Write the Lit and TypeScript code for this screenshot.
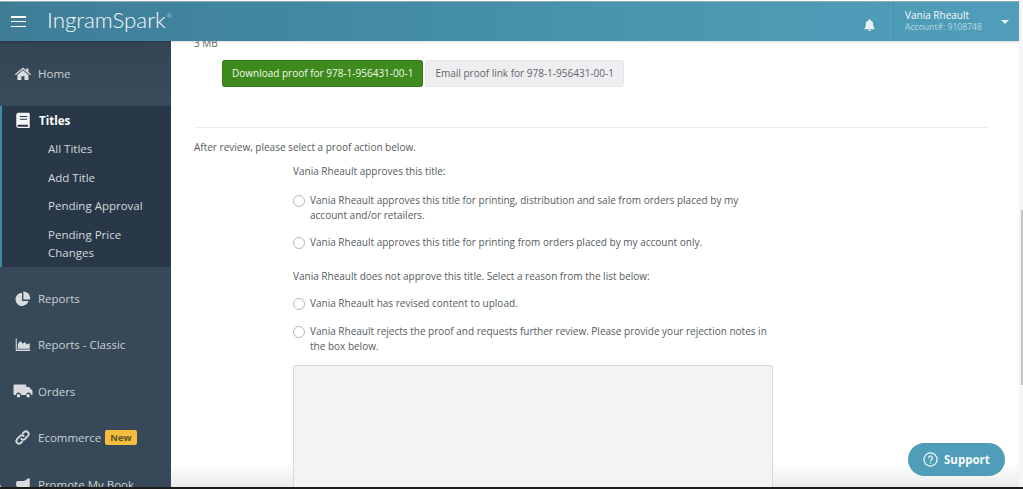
import { LitElement, html, css, svg } from 'lit';
import { customElement } from 'lit/decorators.js';

const icons: Record<string, unknown> = {
  home: svg`<path d="M10.500 3 1 10.800l1 1.300L10.500 5l8.500 7.100 1-1.300-3-2.500V4h-2.500v2.100z"/><path d="M10.500 6.300 4 11.700V17.500h4.700v-4.300h3.600v4.300H17v-5.800z"/>`,
  book: svg`<path fill-rule="evenodd" d="M5 2h11a1.500 1.500 0 0 1 1.500 1.500V18a1 1 0 0 1-1 1H5a2.500 2.500 0 0 1-2.500-2.500v-12A2.500 2.500 0 0 1 5 2zm1.500 3.500v1.300h8V5.500zm0 3v1.300h8V8.500zM5 15.200a1.200 1.200 0 0 0 0 2.400h10.500v-2.400z"/>`,
  pie: svg`<path d="M9.500 3.200a7.800 7.800 0 1 0 7.600 9.600H9.500z"/><path d="M11 1.800v9.400h7.800c.2-.7.2-1.300.2-2a7.800 7.800 0 0 0-8-7.400z"/>`,
  area: svg`<path d="M2 3h1.300v13H19v1.500H2z"/><path d="M4.500 15V9.500l3-3.500 3 3 2.200-2 2.300 3 3.500-1.500V15z"/>`,
  truck: svg`<path d="M1.500 3.500h10.800a1 1 0 0 1 1 1V6h2.700l3.500 3.700V14h-1.400a2.500 2.500 0 0 0-5 0H8a2.500 2.500 0 0 0-5 0H1.500a1 1 0 0 1-1-1V4.500a1 1 0 0 1 1-1z"/><circle cx="5.500" cy="14.700" r="1.800"/><circle cx="15.100" cy="14.700" r="1.800"/>`,
  link: svg`<path fill="none" stroke="currentColor" stroke-width="2.100" stroke-linecap="round" d="M8.500 11.500a3.200 3.200 0 0 0 4.500 0l3.500-3.500A3.200 3.200 0 0 0 12 3.500l-1.500 1.500M11.500 8.500a3.200 3.200 0 0 0-4.500 0L3.500 12A3.200 3.200 0 0 0 8 16.500L9.500 15"/>`,
  horn: svg`<path d="M17 2.500h1.500v14H17l-5-3.500H4.500a2 2 0 0 1-2-2V8a2 2 0 0 1 2-2H12z"/><path d="M5 13.500h3l1 5H6.500z"/>`,
};

interface NavItem {
  icon: string;
  label: string;
  badge?: string;
}

const bottomItems: NavItem[] = [
  { icon: 'pie', label: 'Reports' },
  { icon: 'area', label: 'Reports - Classic' },
  { icon: 'truck', label: 'Orders' },
  { icon: 'link', label: 'Ecommerce', badge: 'New' },
  { icon: 'horn', label: 'Promote My Book' },
];
const subItems = ['All Titles', 'Add Title', 'Pending Approval', 'Pending Price Changes'];

@customElement('app-root')
export class AppRoot extends LitElement {
  static override styles = css`
    :host {
      display: flex;
      flex-direction: column;
      position: relative;
      width: 1023px;
      height: 489px;
      overflow: hidden;
      background: #fff;
      font-family: 'Open Sans', sans-serif;
      font-size: 10px;
      color: #565b60;
    }
    .header {
      flex: 0 0 40px;
      margin-top: 1px;
      margin-right: 4px;
      display: flex;
      align-items: stretch;
      color: #fff;
      background: linear-gradient(90deg, #3f7d97 0%, #428aa5 35%, #4d9ab5 75%, #4f9db8 100%);
      border-top: 1px solid #8fa9b4;
      box-sizing: border-box;
      box-shadow: 0 1px 2px rgba(0, 0, 0, 0.15);
      z-index: 2;
    }
    .burger {
      width: 15px;
      margin: 14px 0 0 11px;
      height: 11px;
      display: flex;
      flex-direction: column;
      justify-content: space-between;
    }
    .burger i {
      display: block;
      height: 1.500px;
      background: #fff;
    }
    .logo {
      margin-left: 21px;
      font-family: 'Lato', sans-serif;
      font-weight: 300;
      font-size: 22.300px;
      line-height: 35px;
      color: #f4f8fa;
    }
    .logo sup {
      font-size: 6px;
      line-height: 0;
      vertical-align: 10px;
      margin-left: 1px;
    }
    .spacer {
      flex: 1;
    }
    .bell {
      width: 11px;
      height: 12px;
      margin: 17px 18px 0 0;
      fill: #e8f2f6;
    }
    .account {
      width: 126px;
      box-sizing: border-box;
      border-left: 1px solid #4890aa;
      padding: 7px 0 0 11px;
      position: relative;
    }
    .account .name {
      font-size: 10px;
      line-height: 13px;
      color: #f5f9fb;
    }
    .account .num {
      font-size: 8.600px;
      line-height: 11px;
      color: #b9d8e3;
    }
    .caret {
      position: absolute;
      right: 10px;
      top: 18px;
      border-left: 4.500px solid transparent;
      border-right: 4.500px solid transparent;
      border-top: 4.500px solid #e8f2f6;
    }
    .body {
      flex: 1;
      display: flex;
      min-height: 0;
    }
    .side {
      flex: 0 0 171px;
      background: #374858;
      color: #ccd1d6;
      font-size: 11.500px;
      overflow: hidden;
      border-bottom-left-radius: 5px;
    }
    .item {
      display: flex;
      align-items: center;
      height: 46.500px;
      padding-left: 14px;
      box-sizing: border-box;
    }
    .item svg {
      width: 17px;
      height: 17px;
      flex: none;
      fill: currentColor;
      color: #d8dcdf;
      margin-right: 7px;
    }
    .item svg.truck {
      width: 20px;
      height: 20px;
      margin: 0 5px 0 -1px;
    }
    .home {
      height: 65px;
      background: linear-gradient(180deg, #334453, #3a4c5c);
    }
    .badge {
      margin-left: 4px;
      background: #f5bd3c;
      color: #5c5326;
      font-size: 9.500px;
      font-weight: 700;
      line-height: 15px;
      padding: 0 5px;
      border-radius: 2px;
    }
    .active {
      background: #283848;
      border-left: 2px solid #3f8aa6;
      height: 161px;
      box-sizing: border-box;
    }
    .active .head {
      display: flex;
      align-items: center;
      padding: 3px 0 0 12px;
      height: 22px;
      color: #fff;
      font-weight: 700;
    }
    .active .head svg {
      width: 18px;
      height: 18px;
      fill: #f4f5f6;
      margin-right: 7px;
    }
    .sub {
      margin: 9px 12px 0 46px;
      padding: 0;
      list-style: none;
      line-height: 18px;
    }
    .sub li {
      margin-bottom: 10.500px;
      color: #d3d8dc;
    }
    .rest {
      padding-top: 8px;
    }
    .main {
      flex: 1;
      min-width: 0;
      overflow: hidden;
      padding: 0 35px 0 23px;
      background: linear-gradient(180deg, #fff 94%, #e9e9e9 100%);
    }
    .size {
      margin-top: -3px;
      line-height: 11px;
      color: #666;
    }
    .btns {
      display: flex;
      gap: 2px;
      margin: 11px 0 0 28px;
    }
    .btn {
      height: 27px;
      line-height: 25px;
      box-sizing: border-box;
      padding: 0 9px;
      border-radius: 2.500px;
      white-space: nowrap;
    }
    .primary {
      background: #3e8a1c;
      border: 1px solid #35751a;
      color: #f2f7ef;
    }
    .secondary {
      background: #eeeef1;
      border: 1px solid #e6e6ea;
      color: #5f6367;
    }
    hr {
      border: 0;
      border-top: 1px solid #ececec;
      margin: 40px 0 0;
    }
    .lead {
      margin: 12px 0 0;
      line-height: 14px;
    }
    .form {
      margin: 10px 0 0 99px;
      width: 480px;
    }
    .form p {
      margin: 0;
      line-height: 15px;
    }
    .opt {
      display: flex;
      line-height: 15px;
      margin-top: 12px;
    }
    .opt.first {
      margin-top: 14px;
    }
    .opt .dot {
      flex: none;
      width: 10px;
      height: 10px;
      margin: 2px 5px 0 0;
      border: 1px solid #b5b8ba;
      border-radius: 50%;
      background: #fff;
    }
    .form p.second {
      margin-top: 19px;
    }
    .opt.tight {
      margin-top: 13px;
    }
    .notes {
      display: block;
      margin-top: 11px;
      width: 480px;
      height: 160px;
      box-sizing: border-box;
      background: #f3f3f3;
      border: 1px solid #d9d9d9;
      border-radius: 2px;
    }
    .support {
      position: absolute;
      left: 908px;
      top: 443px;
      width: 97px;
      height: 33px;
      display: flex;
      align-items: center;
      gap: 6px;
      box-sizing: border-box;
      padding-left: 15px;
      border-radius: 17px;
      background: #4f9db8;
      color: #f6fafb;
      font-size: 11.500px;
      font-weight: 700;
      z-index: 3;
    }
    .support svg {
      width: 15px;
      height: 15px;
      flex: none;
    }
    .scroll {
      position: absolute;
      right: 0;
      top: 0;
      bottom: 0;
      width: 4px;
      background: #f6f6f6;
      z-index: 1;
    }
    .scroll i {
      position: absolute;
      right: 0;
      top: 210px;
      width: 2px;
      height: 175px;
      background: #c4c4c4;
    }
    .edge {
      position: absolute;
      left: 0;
      right: 0;
      bottom: 0;
      height: 2px;
      background: #1c1c1c;
      z-index: 4;
    }
  `;

  private renderItem(item: NavItem) {
    return html`<div class="item">
      <svg class=${item.icon} viewBox="0 0 20 20">${icons[item.icon]}</svg>
      <span>${item.label}</span>
      ${item.badge ? html`<span class="badge">${item.badge}</span>` : ''}
    </div>`;
  }

  override render() {
    return html`
      <div class="header">
        <div class="burger"><i></i><i></i><i></i></div>
        <div class="logo">IngramSpark<sup>®</sup></div>
        <div class="spacer"></div>
        <svg class="bell" viewBox="0 0 12 13">
          <path d="M6 0a1 1 0 0 1 1 1v.6A4 4 0 0 1 10 5.500c0 3 .8 3.800 1.600 4.700V11H.4v-.8C1.200 9.300 2 8.500 2 5.500a4 4 0 0 1 3-3.900V1a1 1 0 0 1 1-1zM4.500 11.700h3A1.500 1.500 0 0 1 6 13a1.500 1.500 0 0 1-1.500-1.300z" />
        </svg>
        <div class="account">
          <div class="name">Vania Rheault</div>
          <div class="num">Account#: 9108748</div>
          <div class="caret"></div>
        </div>
      </div>
      <div class="body">
        <nav class="side">
          <div class="item home">
            <svg viewBox="0 0 20 20">${icons.home}</svg><span>Home</span>
          </div>
          <div class="active">
            <div class="head">
              <svg viewBox="0 0 20 20">${icons.book}</svg><span>Titles</span>
            </div>
            <ul class="sub">
              ${subItems.map((s) => html`<li>${s}</li>`)}
            </ul>
          </div>
          <div class="rest">${bottomItems.map((i) => this.renderItem(i))}</div>
        </nav>
        <main class="main">
          <div class="size">3 MB</div>
          <div class="btns">
            <div class="btn primary">Download proof for 978-1-956431-00-1</div>
            <div class="btn secondary">Email proof link for 978-1-956431-00-1</div>
          </div>
          <hr />
          <p class="lead">After review, please select a proof action below.</p>
          <div class="form">
            <p>Vania Rheault approves this title:</p>
            <div class="opt first">
              <span class="dot"></span>
              <span>Vania Rheault approves this title for printing, distribution and sale from orders placed by my account and/or retailers.</span>
            </div>
            <div class="opt">
              <span class="dot"></span>
              <span>Vania Rheault approves this title for printing from orders placed by my account only.</span>
            </div>
            <p class="second">Vania Rheault does not approve this title. Select a reason from the list below:</p>
            <div class="opt">
              <span class="dot"></span>
              <span>Vania Rheault has revised content to upload.</span>
            </div>
            <div class="opt tight">
              <span class="dot"></span>
              <span>Vania Rheault rejects the proof and requests further review. Please provide your rejection notes in the box below.</span>
            </div>
            <div class="notes"></div>
          </div>
        </main>
      </div>
      <div class="support">
        <svg viewBox="0 0 15 15">
          <circle cx="7.500" cy="7.500" r="6.600" fill="none" stroke="#f6fafb" stroke-width="1.200" />
          <path d="M5.500 5.900a2 2 0 1 1 3.100 1.700c-.7.500-1.100.8-1.100 1.600" fill="none" stroke="#f6fafb" stroke-width="1.200" />
          <circle cx="7.500" cy="11" r=".8" fill="#f6fafb" />
        </svg>
        Support
      </div>
      <div class="scroll"><i></i></div>
      <div class="edge"></div>
    `;
  }
}
